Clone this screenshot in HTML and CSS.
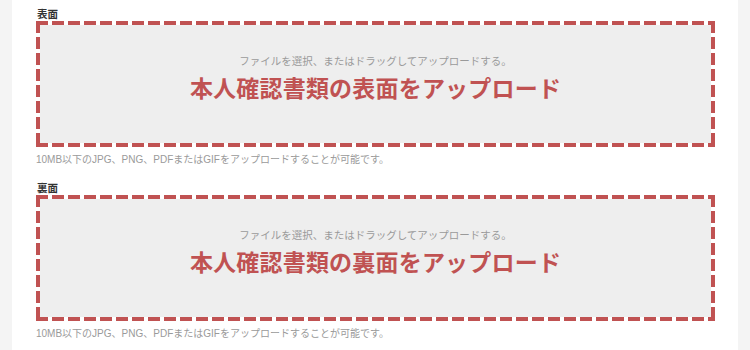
FILE: index.html
```html
<!DOCTYPE html>
<html lang="ja">
<head>
<meta charset="utf-8">
<title>本人確認書類のアップロード</title>
<link rel="stylesheet" href="styles.css">
</head>
<body>
<div class="card">
  <section class="field">
    <div class="label">表面</div>
    <div class="drop">
      <p class="hint">ファイルを選択、またはドラッグしてアップロードする。</p>
      <p class="title">本人確認書類の表面をアップロード</p>
    </div>
    <p class="note">10MB以下のJPG、PNG、PDFまたはGIFをアップロードすることが可能です。</p>
  </section>
  <section class="field">
    <div class="label">裏面</div>
    <div class="drop">
      <p class="hint">ファイルを選択、またはドラッグしてアップロードする。</p>
      <p class="title">本人確認書類の裏面をアップロード</p>
    </div>
    <p class="note">10MB以下のJPG、PNG、PDFまたはGIFをアップロードすることが可能です。</p>
  </section>
</div>
</body>
</html>
```

FILE: styles.css
```css
html, body {
  margin: 0;
  padding: 0;
  background: #f4f4f4;
  height: 100%;
}
body {
  font-family: "Liberation Sans", "Noto Sans CJK JP", sans-serif;
}
.card {
  background: #ffffff;
  margin: 0 12px;
  padding: 8px 23px 0 24px;
  min-height: 100%;
  box-sizing: border-box;
}
.field {
  margin-bottom: 16px;
}
.label {
  font-size: 10.5px;
  line-height: 13px;
  height: 13px;
  font-weight: bold;
  color: #333333;
  padding-left: 1px;
}
.drop {
  height: 126px;
  box-sizing: border-box;
  text-align: center;
  padding-top: 33px;
  background:
    repeating-linear-gradient(90deg, #c05252 0 12px, transparent 12px 16px) left top / 100% 4px no-repeat,
    repeating-linear-gradient(90deg, #c05252 0 12px, transparent 12px 16px) left bottom / 100% 4px no-repeat,
    repeating-linear-gradient(180deg, #c05252 0 12px, transparent 12px 16px) left top / 4px 100% no-repeat,
    repeating-linear-gradient(180deg, #c05252 0 12px, transparent 12px 16px) right top / 4px 100% no-repeat,
    linear-gradient(#eeeeee, #eeeeee) 4px 4px / calc(100% - 8px) calc(100% - 8px) no-repeat,
    #ffffff;
}
.hint {
  margin: 0;
  font-size: 10.5px;
  line-height: 14px;
  color: #9a9a9a;
}
.title {
  margin: 8px 0 0;
  font-size: 23px;
  line-height: 26px;
  font-weight: bold;
  color: #c05252;
  letter-spacing: 0.2px;
}
.note {
  margin: 7px 0 0;
  font-size: 10px;
  line-height: 12px;
  color: #9a9a9a;
}
```
